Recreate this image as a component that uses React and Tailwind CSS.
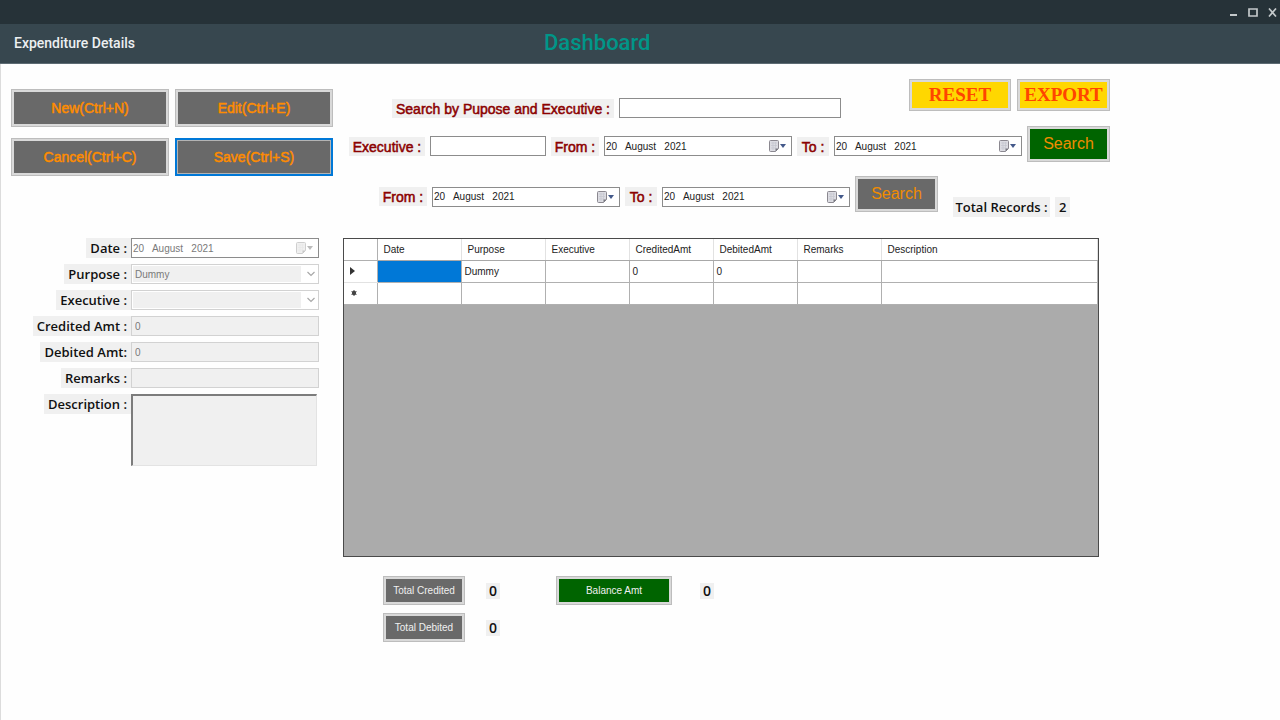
import { useState } from 'react';

const columns = ['Date', 'Purpose', 'Executive', 'CreditedAmt', 'DebitedAmt', 'Remarks', 'Description'];

const today = '20   August   2021';

const emptyForm = {
  date: today,
  purpose: 'Dummy',
  executive: '',
  credited: '0',
  debited: '0',
  remarks: '',
  description: '',
};

const records = [
  { Date: '', Purpose: 'Dummy', Executive: '', CreditedAmt: '0', DebitedAmt: '0', Remarks: '', Description: '' },
];

const CalendarIcon = () => (
  <svg width="18" height="14" viewBox="0 0 18 14" fill="none">
    <path d="M1.500 1.500h7a1 1 0 0 1 1 1v7l-3 3h-5a1 1 0 0 1-1-1v-9a1 1 0 0 1 1-1z" fill="#dcdce2" stroke="#8b8890" />
    <path d="M2 4h6M2 6.500h6M2 9h4M4 3v8M6.500 3v7" stroke="#c3c4ce" strokeWidth="0.700" />
    <path d="M9.500 9.500l-3 3v-3z" fill="#77777f" />
    <path d="M11 5h6l-3 4z" fill="#44598a" />
  </svg>
);

const DatePicker = ({ id, value, onChange, disabled }) => (
  <div className="flex h-5 w-[188px] shrink-0 items-center border border-[#8c8c8c] bg-white pl-px pr-1">
    <input
      id={id}
      type="text"
      value={value}
      disabled={disabled}
      onChange={e => onChange(e.target.value)}
      className="h-full min-w-0 flex-1 bg-transparent text-[10px] text-[#222] outline-none disabled:text-[#7a7a7a]"
    />
    <button type="button" aria-label="Open calendar" disabled={disabled} className="disabled:opacity-40 disabled:grayscale">
      <CalendarIcon />
    </button>
  </div>
);

const ActionButton = ({ children, active }) => (
  <button
    type="button"
    className={
      active
        ? 'h-[38px] border-2 border-[#0078d7] bg-[#696969] text-sm text-[#ff8c00] shadow-[inset_0_0_0_1px_#b4b4b4] [-webkit-text-stroke:0.5px]'
        : 'h-[38px] border border-[#bdbdbd] bg-[#696969] text-sm text-[#ff8c00] shadow-[inset_0_0_0_2px_#d9d9d9] [-webkit-text-stroke:0.5px]'
    }
  >
    {children}
  </button>
);

const SearchLabel = ({ htmlFor, className, children }) => (
  <label
    htmlFor={htmlFor}
    className={`h-[19px] shrink-0 whitespace-nowrap bg-[#f0f0f0] text-center text-sm leading-5 text-[#8b0000] [-webkit-text-stroke:0.5px] ${className}`}
  >
    {children}
  </label>
);

const Field = ({ id, label, children }) => (
  <div className="flex items-start">
    <div className="flex w-[120px] shrink-0 justify-end">
      <label
        htmlFor={id}
        className="h-5 bg-[#f0f0f0] px-1 font-['Open_Sans',sans-serif] text-[13px] leading-5 font-semibold whitespace-nowrap text-[#111]"
      >
        {label}
      </label>
    </div>
    {children}
  </div>
);

const SelectBox = ({ id, value, options, onChange }) => (
  <div className="flex h-5 w-[188px] items-center border border-[#d2d2d2] bg-white p-px pr-[3px]">
    <select
      id={id}
      disabled
      value={value}
      onChange={e => onChange(e.target.value)}
      className="h-full min-w-0 flex-1 appearance-none bg-[#f0f0f0] pl-0.5 text-[10px] text-[#7a7a7a] opacity-100"
    >
      {options.map(option => (
        <option key={option} value={option}>
          {option}
        </option>
      ))}
    </select>
    <svg width="8" height="6" viewBox="0 0 8 6" fill="none" className="ml-1.5">
      <path d="M0.500 1L4 4.500L7.500 1" stroke="#a8a8a8" strokeWidth="1.200" />
    </svg>
  </div>
);

const textBox =
  'h-5 w-[188px] border border-[#d2d2d2] bg-[#f0f0f0] px-[3px] text-[10px] text-[#7a7a7a] outline-none';

const EntryForm = () => {
  const [form, setForm] = useState(emptyForm);
  const update = key => value => setForm({ ...form, [key]: value });

  return (
    <form className="mt-[62px] flex flex-col gap-1.5">
      <Field id="date" label="Date :">
        <DatePicker id="date" value={form.date} onChange={update('date')} disabled />
      </Field>
      <Field id="purpose" label="Purpose :">
        <SelectBox id="purpose" value={form.purpose} options={['Dummy']} onChange={update('purpose')} />
      </Field>
      <Field id="executive" label="Executive :">
        <SelectBox id="executive" value={form.executive} options={['']} onChange={update('executive')} />
      </Field>
      <Field id="credited" label="Credited Amt :">
        <input id="credited" type="text" disabled value={form.credited} onChange={e => update('credited')(e.target.value)} className={textBox} />
      </Field>
      <Field id="debited" label="Debited Amt:">
        <input id="debited" type="text" disabled value={form.debited} onChange={e => update('debited')(e.target.value)} className={textBox} />
      </Field>
      <Field id="remarks" label="Remarks :">
        <input id="remarks" type="text" disabled value={form.remarks} onChange={e => update('remarks')(e.target.value)} className={textBox} />
      </Field>
      <Field id="description" label="Description :">
        <textarea
          id="description"
          disabled
          value={form.description}
          onChange={e => update('description')(e.target.value)}
          className="h-[72px] w-[186px] resize-none border border-t-2 border-l-2 border-[#e3e3e3] border-t-[#7c7c7c] border-l-[#7c7c7c] bg-[#f0f0f0]"
        />
      </Field>
    </form>
  );
};

const Filters = () => {
  const [text, setText] = useState('');
  const [executive, setExecutive] = useState('');
  const [dates, setDates] = useState({ execFrom: today, execTo: today, from: today, to: today });
  const setDate = key => value => setDates({ ...dates, [key]: value });

  return (
    <div>
      <div className="flex items-end justify-between">
        <div className="mb-px flex items-center gap-[5px] pl-[49px]">
          <SearchLabel htmlFor="search" className="w-[222px]">
            Search by Pupose and Executive :
          </SearchLabel>
          <input
            id="search"
            type="text"
            value={text}
            onChange={e => setText(e.target.value)}
            className="h-5 w-[222px] border border-[#8c8c8c] bg-white px-1 text-[10px] outline-none"
          />
        </div>
        <div className="mb-2 flex gap-1.5 font-['Liberation_Serif',serif] text-[19px] font-bold text-[#ff4500]">
          <button type="button" className="h-8 w-[102px] border border-[#bdbdbd] bg-[#ffd700] shadow-[inset_0_0_0_2px_#d9d9d9]">
            RESET
          </button>
          <button type="button" className="h-8 w-[93px] border border-[#bdbdbd] bg-[#ffd700] shadow-[inset_0_0_0_2px_#d9d9d9]">
            EXPORT
          </button>
        </div>
      </div>

      <div className="mt-[7px] flex h-10 items-center gap-[5px] pl-1.5">
        <SearchLabel htmlFor="exec" className="w-[76px]">
          Executive :
        </SearchLabel>
        <input
          id="exec"
          type="text"
          value={executive}
          onChange={e => setExecutive(e.target.value)}
          className="h-5 w-[116px] border border-[#8c8c8c] bg-white px-1 text-[10px] outline-none"
        />
        <SearchLabel htmlFor="execFrom" className="w-12">
          From :
        </SearchLabel>
        <DatePicker id="execFrom" value={dates.execFrom} onChange={setDate('execFrom')} />
        <SearchLabel htmlFor="execTo" className="w-8">
          To :
        </SearchLabel>
        <DatePicker id="execTo" value={dates.execTo} onChange={setDate('execTo')} />
        <button
          type="button"
          className="ml-auto h-9 w-[83px] self-start border border-[#bdbdbd] bg-[#006400] text-base text-[#f08c00] shadow-[inset_0_0_0_2px_#d9d9d9]"
        >
          Search
        </button>
      </div>

      <div className="mt-2.5 flex h-[41px] items-center gap-[5px] pl-9">
        <SearchLabel htmlFor="from" className="w-12">
          From :
        </SearchLabel>
        <DatePicker id="from" value={dates.from} onChange={setDate('from')} />
        <SearchLabel htmlFor="to" className="w-8">
          To :
        </SearchLabel>
        <DatePicker id="to" value={dates.to} onChange={setDate('to')} />
        <button
          type="button"
          className="h-9 w-[83px] self-start border border-[#bdbdbd] bg-[#696969] text-base text-[#f08c00] shadow-[inset_0_0_0_2px_#d9d9d9]"
        >
          Search
        </button>
        <div className="ml-2.5 flex gap-[5px] self-end font-['Open_Sans',sans-serif] text-[13px] leading-5 font-semibold whitespace-nowrap text-[#111]">
          <span className="w-[97px] bg-[#f0f0f0] text-center">Total Records :</span>
          <span className="bg-[#f0f0f0] px-1">2</span>
        </div>
      </div>
    </div>
  );
};

const RecordsGrid = () => (
  <div className="mt-[21px] mr-[11px] h-[319px] overflow-auto border border-[#4a4a4a] bg-[#ababab]">
    <table className="w-full table-fixed border-collapse bg-white text-[10px] text-[#222]">
      <thead>
        <tr className="h-[21px]">
          <th className="w-[33px] border-r border-b border-[#b0b0b0]" />
          {columns.map(column => (
            <th
              key={column}
              className="w-[84px] border-r border-b border-r-[#e2e2e2] border-b-[#a8a8a8] pl-1.5 text-left font-normal last:w-auto"
            >
              {column}
            </th>
          ))}
        </tr>
      </thead>
      <tbody>
        {records.map((record, i) => (
          <tr key={i} className="h-[22px]">
            <td className="border-r border-b border-[#b0b0b0] border-b-[#e2e2e2] pl-1.5">
              <svg width="5" height="8" viewBox="0 0 5 8">
                <path d="M0 0l5 4l-5 4z" fill="#333" />
              </svg>
            </td>
            {columns.map(column => (
              <td key={column} className="border-r border-b border-[#b0b0b0] pl-[3px] nth-[2]:bg-[#0078d7]">
                {record[column]}
              </td>
            ))}
          </tr>
        ))}
        <tr className="h-[22px]">
          <td className="border-r border-b border-[#b0b0b0] pl-[7px]">
            <svg width="6" height="6" viewBox="0 0 6 6">
              <circle cx="3" cy="3" r="2.200" fill="#444" />
              <path d="M3 0v6M0.500 1.500l5 3M5.500 1.500l-5 3" stroke="#444" strokeWidth="0.900" />
            </svg>
          </td>
          {columns.map(column => (
            <td key={column} className="border-r border-b border-[#b0b0b0]" />
          ))}
        </tr>
      </tbody>
    </table>
  </div>
);

const Amount = ({ children }) => (
  <span className="bg-[#f0f0f0] px-[3px] font-['Open_Sans',sans-serif] text-sm leading-4 font-semibold text-[#111]">
    {children}
  </span>
);

const Totals = () => (
  <div className="mt-[19px] ml-10 flex flex-col gap-2 text-[10px] text-[#f0f0f0]">
    <div className="flex items-center">
      <button type="button" className="h-[29px] w-[82px] border border-[#bdbdbd] bg-[#696969] shadow-[inset_0_0_0_2px_#d9d9d9]">
        Total Credited
      </button>
      <div className="flex w-[91px] pl-[21px]">
        <Amount>0</Amount>
      </div>
      <button type="button" className="mr-7 h-[29px] w-[116px] border border-[#bdbdbd] bg-[#006400] shadow-[inset_0_0_0_2px_#d9d9d9]">
        Balance Amt
      </button>
      <Amount>0</Amount>
    </div>
    <div className="flex items-center">
      <button type="button" className="h-[29px] w-[82px] border border-[#bdbdbd] bg-[#696969] shadow-[inset_0_0_0_2px_#d9d9d9]">
        Total Debited
      </button>
      <div className="flex w-[91px] pl-[21px]">
        <Amount>0</Amount>
      </div>
    </div>
  </div>
);

const App = () => (
  <div className="min-h-screen bg-[#fefefe] font-['Liberation_Sans',Arial,sans-serif]">
    <div className="flex h-6 items-center justify-end gap-2.5 bg-[#263238] pr-[3px] text-[#c3c8ca]">
      <button type="button" aria-label="Minimize">
        <svg width="9" height="9" viewBox="0 0 9 9">
          <path d="M1 7h7" stroke="currentColor" strokeWidth="2" />
        </svg>
      </button>
      <button type="button" aria-label="Maximize">
        <svg width="10" height="9" viewBox="0 0 10 9" fill="none">
          <path d="M1 1h8v7h-8z" stroke="currentColor" strokeWidth="1.700" />
        </svg>
      </button>
      <button type="button" aria-label="Close">
        <svg width="9" height="9" viewBox="0 0 9 9">
          <path d="M1 0.500l7 8M8 0.500l-7 8" stroke="currentColor" strokeWidth="1.700" />
        </svg>
      </button>
    </div>
    <header className="flex h-10 items-center border-b border-[#5d6b73] bg-[#37474f] pb-0.5 pl-3.5 font-['Roboto',sans-serif]">
      <h2 className="w-[530px] text-sm font-medium text-[#eceff1]">Expenditure Details</h2>
      <h1 className="text-[22px] font-medium text-[#009688]">Dashboard</h1>
    </header>

    <main className="flex min-h-[656px] gap-2.5 border-l border-[#dcdcdc] pl-2.5">
      <section className="w-[322px] shrink-0 pt-[25px]">
        <div className="grid grid-cols-2 gap-x-1.5 gap-y-[11px]">
          <ActionButton>New(Ctrl+N)</ActionButton>
          <ActionButton>Edit(Ctrl+E)</ActionButton>
          <ActionButton>Cancel(Ctrl+C)</ActionButton>
          <ActionButton active>Save(Ctrl+S)</ActionButton>
        </div>
        <EntryForm />
      </section>

      <section className="min-w-0 flex-1 pt-[15px] pr-[170px]">
        <Filters />
        <RecordsGrid />
        <Totals />
      </section>
    </main>
  </div>
);

export default App;
